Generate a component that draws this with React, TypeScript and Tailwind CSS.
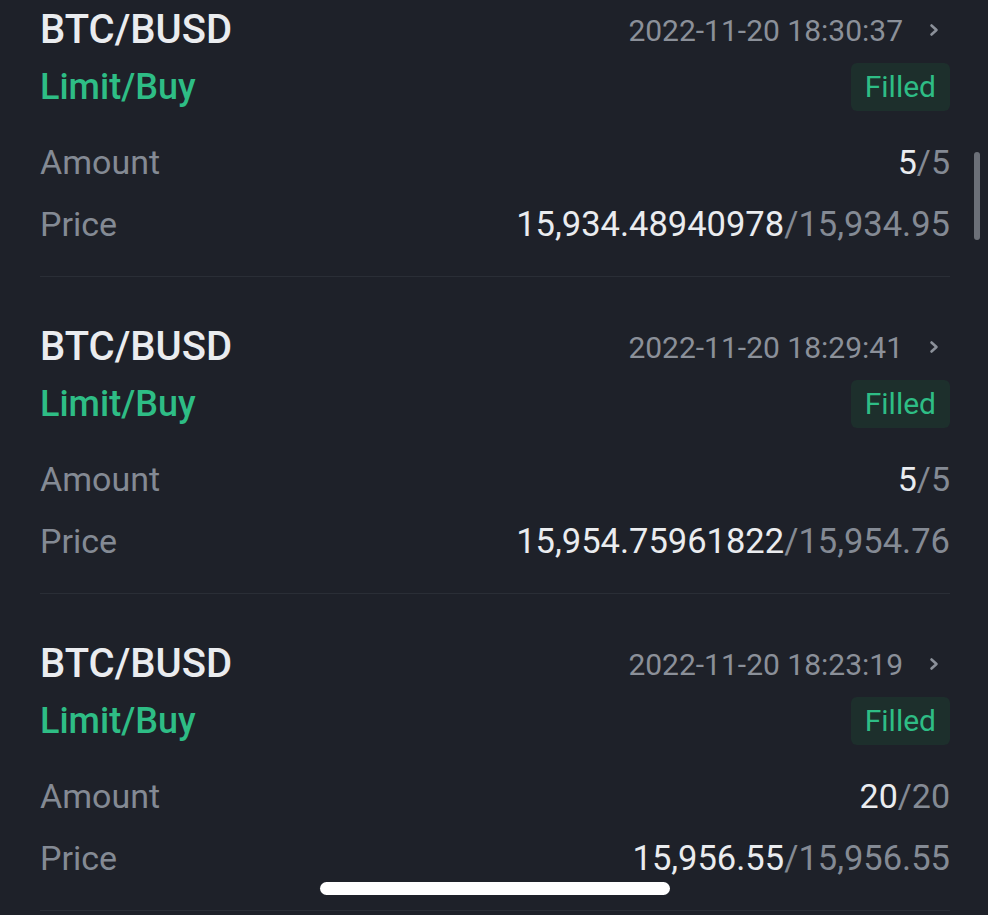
interface Order {
  pair: string;
  time: string;
  side: string;
  status: string;
  filled: string;
  amount: string;
  avgPrice: string;
  price: string;
}

const orders: Order[] = [
  {
    pair: 'BTC/BUSD',
    time: '2022-11-20 18:30:37',
    side: 'Limit/Buy',
    status: 'Filled',
    filled: '5',
    amount: '5',
    avgPrice: '15,934.48940978',
    price: '15,934.95',
  },
  {
    pair: 'BTC/BUSD',
    time: '2022-11-20 18:29:41',
    side: 'Limit/Buy',
    status: 'Filled',
    filled: '5',
    amount: '5',
    avgPrice: '15,954.75961822',
    price: '15,954.76',
  },
  {
    pair: 'BTC/BUSD',
    time: '2022-11-20 18:23:19',
    side: 'Limit/Buy',
    status: 'Filled',
    filled: '20',
    amount: '20',
    avgPrice: '15,956.55',
    price: '15,956.55',
  },
];

export default function App() {
  return (
    <div
      className="relative h-[915px] w-[988px] overflow-hidden bg-[#1e2129]"
      style={{ fontFamily: 'Roboto, "Noto Sans", sans-serif' }}
    >
      <div className="-mt-[40px] pl-[40px] pr-[38px]">
        {orders.map((o, i) => (
          <OrderCard key={i} order={o} />
        ))}
      </div>

      {/* scroll thumb */}
      <div className="absolute left-[974px] top-[152px] h-[88px] w-[6px] rounded-full bg-[#6c7078]" />

      {/* home indicator */}
      <div className="absolute left-[320px] top-[882px] h-[13px] w-[350px] rounded-full bg-white" />
    </div>
  );
}

function OrderCard({ order }: { order: Order }) {
  return (
    <div className="border-b border-[#2a2e36] pb-[28px] pt-[45px]">
      <div className="flex h-[48px] items-center justify-between">
        <span className="mt-[2px] text-[40px] font-medium leading-none text-[#eaecef]">{order.pair}</span>
        <span className="mt-[4px] flex items-center text-[30px] leading-none text-[#8b9099]">
          {order.time}
          <svg
            className="ml-[25px] mr-[10px] -mt-[3px]"
            width="12"
            height="14"
            viewBox="0 0 12 14"
            fill="none"
            stroke="currentColor"
            strokeWidth="2.6"
            strokeLinecap="round"
            strokeLinejoin="round"
          >
            <path d="M3.5 2.5 L8.5 7 L3.5 11.5" />
          </svg>
        </span>
      </div>

      <div className="mt-[10px] flex h-[48px] items-center justify-between">
        <span className="text-[36px] font-medium leading-none text-[#2ebd85]">{order.side}</span>
        <span className="flex h-[48px] items-center rounded-[6px] bg-[#1d2f2c] px-[14px] text-[30px] leading-none text-[#2ebd85]">
          {order.status}
        </span>
      </div>

      <div className="mt-[27px] flex h-[48px] items-center justify-between text-[34px] leading-none">
        <span className="text-[#848a94]">Amount</span>
        <span>
          <span className="text-[#eaecef]">{order.filled}</span>
          <span className="text-[#848a94]">/{order.amount}</span>
        </span>
      </div>

      <div className="mt-[14px] flex h-[48px] items-center justify-between text-[34px] leading-none">
        <span className="text-[#848a94]">Price</span>
        <span className="text-[34.5px]">
          <span className="text-[#eaecef]">{order.avgPrice}</span>
          <span className="text-[#848a94]">/{order.price}</span>
        </span>
      </div>
    </div>
  );
}
